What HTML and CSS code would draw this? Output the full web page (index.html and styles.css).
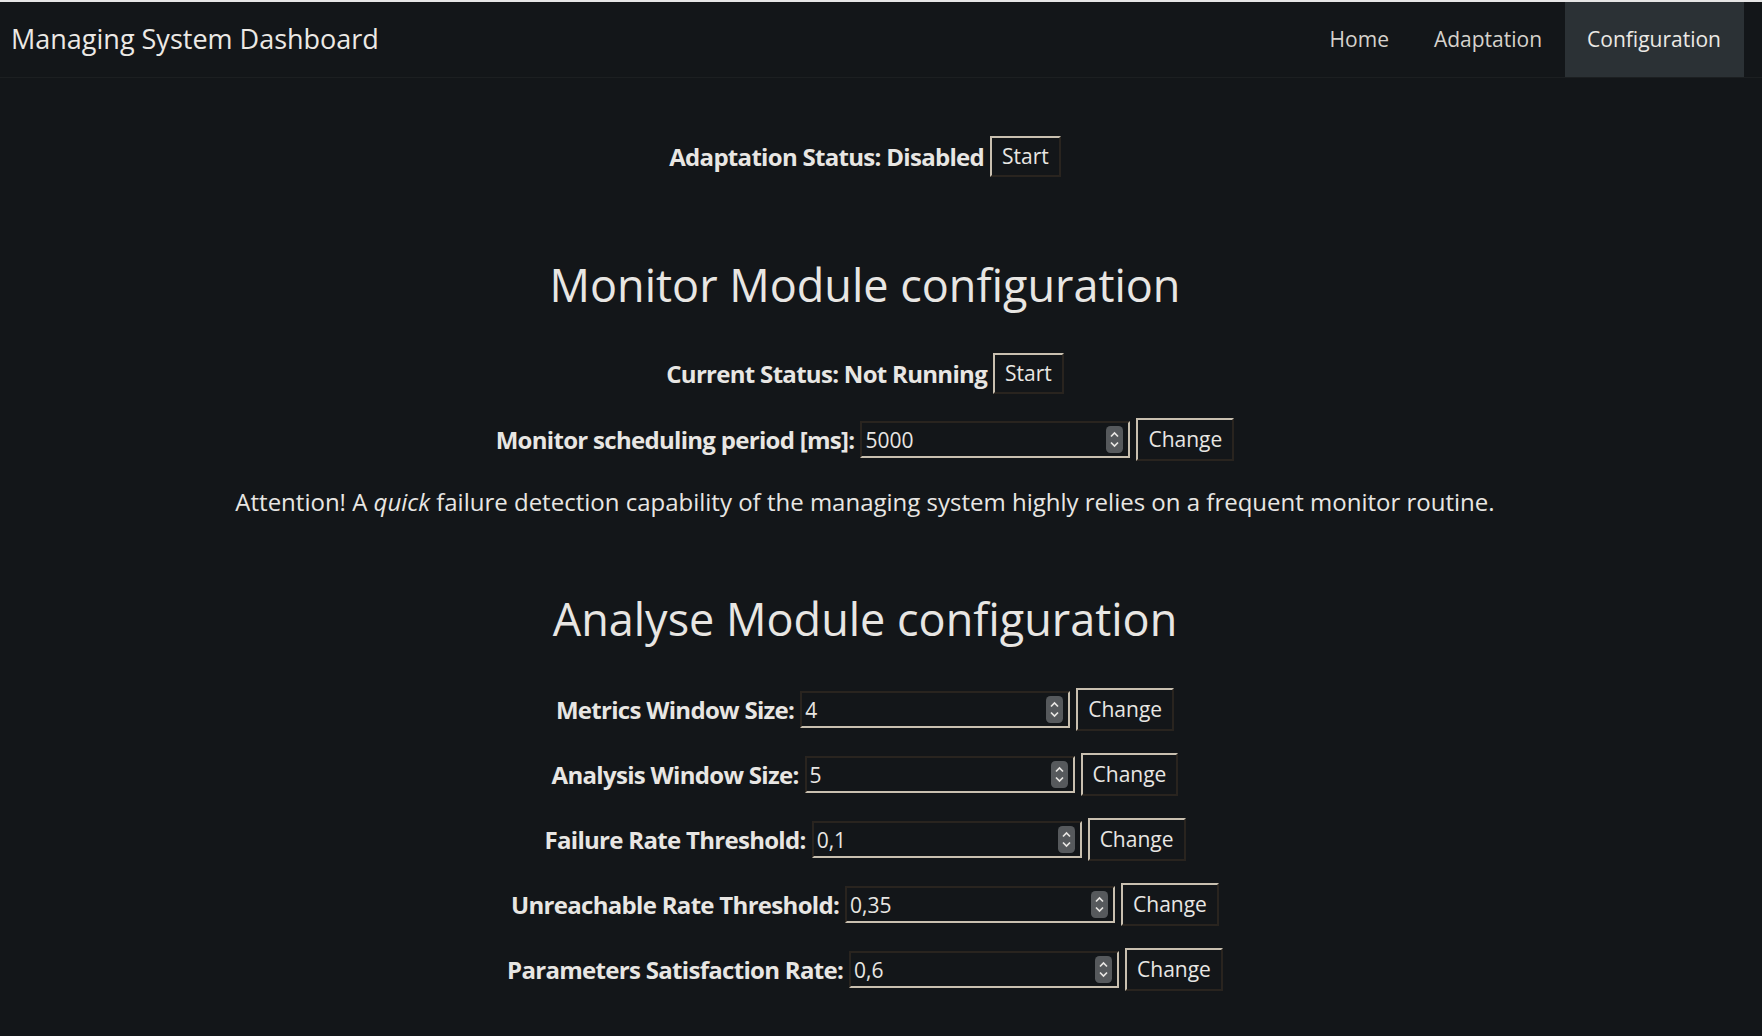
FILE: index.html
```html
<!DOCTYPE html>
<html lang="en">
<head>
<meta charset="utf-8">
<title>Managing System Dashboard</title>
<link rel="stylesheet" href="styles.css">
</head>
<body>
<header class="topbar">
  <div class="brand">Managing System Dashboard</div>
  <nav class="nav">
    <a class="nav-link" href="#">Home</a>
    <a class="nav-link" href="#">Adaptation</a>
    <a class="nav-link active" href="#">Configuration</a>
  </nav>
</header>

<main class="main">
  <div class="row row-adapt">
    <span class="label">Adaptation Status: Disabled</span>
    <button class="btn">Start</button>
  </div>

  <h2 class="section-title first-title">Monitor Module configuration</h2>

  <div class="row row-status">
    <span class="label">Current Status: Not Running</span>
    <button class="btn">Start</button>
  </div>

  <div class="row row-field row-monitor">
    <span class="label">Monitor scheduling period [ms]:</span>
    <div class="numfield">
      <input class="num-input" type="text" value="5000">
      <svg class="spinner" viewBox="0 0 17 27" width="17" height="27"><rect x="0" y="0" width="17" height="27" rx="4.5" fill="#56595c"/><path d="M5 10.5 L8.5 7 L12 10.5" fill="none" stroke="#e8e6e3" stroke-width="1.7"/><path d="M5 16.5 L8.5 20 L12 16.5" fill="none" stroke="#e8e6e3" stroke-width="1.7"/></svg>
    </div>
    <button class="btn btn-change">Change</button>
  </div>

  <p class="attention">Attention! A <em>quick</em> failure detection capability of the managing system highly relies on a frequent monitor routine.</p>

  <h2 class="section-title second-title">Analyse Module configuration</h2>

  <div class="row row-field row-first">
    <span class="label">Metrics Window Size:</span>
    <div class="numfield">
      <input class="num-input" type="text" value="4">
      <svg class="spinner" viewBox="0 0 17 27" width="17" height="27"><rect x="0" y="0" width="17" height="27" rx="4.5" fill="#56595c"/><path d="M5 10.5 L8.5 7 L12 10.5" fill="none" stroke="#e8e6e3" stroke-width="1.7"/><path d="M5 16.5 L8.5 20 L12 16.5" fill="none" stroke="#e8e6e3" stroke-width="1.7"/></svg>
    </div>
    <button class="btn btn-change">Change</button>
  </div>

  <div class="row row-field">
    <span class="label">Analysis Window Size:</span>
    <div class="numfield">
      <input class="num-input" type="text" value="5">
      <svg class="spinner" viewBox="0 0 17 27" width="17" height="27"><rect x="0" y="0" width="17" height="27" rx="4.5" fill="#56595c"/><path d="M5 10.5 L8.5 7 L12 10.5" fill="none" stroke="#e8e6e3" stroke-width="1.7"/><path d="M5 16.5 L8.5 20 L12 16.5" fill="none" stroke="#e8e6e3" stroke-width="1.7"/></svg>
    </div>
    <button class="btn btn-change">Change</button>
  </div>

  <div class="row row-field">
    <span class="label">Failure Rate Threshold:</span>
    <div class="numfield">
      <input class="num-input" type="text" value="0,1">
      <svg class="spinner" viewBox="0 0 17 27" width="17" height="27"><rect x="0" y="0" width="17" height="27" rx="4.5" fill="#56595c"/><path d="M5 10.5 L8.5 7 L12 10.5" fill="none" stroke="#e8e6e3" stroke-width="1.7"/><path d="M5 16.5 L8.5 20 L12 16.5" fill="none" stroke="#e8e6e3" stroke-width="1.7"/></svg>
    </div>
    <button class="btn btn-change">Change</button>
  </div>

  <div class="row row-field">
    <span class="label">Unreachable Rate Threshold:</span>
    <div class="numfield">
      <input class="num-input" type="text" value="0,35">
      <svg class="spinner" viewBox="0 0 17 27" width="17" height="27"><rect x="0" y="0" width="17" height="27" rx="4.5" fill="#56595c"/><path d="M5 10.5 L8.5 7 L12 10.5" fill="none" stroke="#e8e6e3" stroke-width="1.7"/><path d="M5 16.5 L8.5 20 L12 16.5" fill="none" stroke="#e8e6e3" stroke-width="1.7"/></svg>
    </div>
    <button class="btn btn-change">Change</button>
  </div>

  <div class="row row-field">
    <span class="label">Parameters Satisfaction Rate:</span>
    <div class="numfield">
      <input class="num-input" type="text" value="0,6">
      <svg class="spinner" viewBox="0 0 17 27" width="17" height="27"><rect x="0" y="0" width="17" height="27" rx="4.5" fill="#56595c"/><path d="M5 10.5 L8.5 7 L12 10.5" fill="none" stroke="#e8e6e3" stroke-width="1.7"/><path d="M5 16.5 L8.5 20 L12 16.5" fill="none" stroke="#e8e6e3" stroke-width="1.7"/></svg>
    </div>
    <button class="btn btn-change">Change</button>
  </div>
</main>
</body>
</html>
```

FILE: styles.css
```css
html, body {
  margin: 0;
  padding: 0;
  background: #131619;
  color: #e8e6e3;
  font-family: "Open Sans", "Liberation Sans", sans-serif;
  height: 100%;
  overflow: hidden;
}

.topbar {
  display: flex;
  align-items: stretch;
  justify-content: space-between;
  height: 75px;
  border-top: 2px solid #e6e6e6;
  border-bottom: 1px solid #1c1f21;
  background: #131619;
  padding: 0 18px 0 11px;
}

.brand {
  display: flex;
  align-items: center;
  font-size: 27px;
  color: #ece9e5;
  padding-bottom: 2px;
}

.nav {
  display: flex;
  align-items: stretch;
}

.nav-link {
  display: flex;
  align-items: center;
  padding: 0 23px 2px 22px;
  font-size: 21px;
  color: #d6d2cc;
  text-decoration: none;
}

.nav-link.active {
  background: #2b3135;
  color: #ece9e5;
}

.main {
  display: flex;
  flex-direction: column;
  align-items: center;
  text-align: center;
  padding-right: 32px;
}

.row {
  display: flex;
  align-items: center;
  justify-content: center;
  gap: 6px;
}

.label {
  font-weight: 700;
  font-size: 24px;
  letter-spacing: -0.7px;
}

.row-adapt {
  margin-top: 58px;
}

.row-status {
  margin-top: 41px;
}

.row-field {
  margin-top: 22px;
}

.row-monitor {
  margin-top: 24px;
}

.row-first {
  margin-top: 42px;
}

.section-title {
  font-weight: 400;
  font-size: 45px;
  line-height: 54px;
  margin: 0;
}

.first-title {
  margin-top: 81px;
}

.second-title {
  margin-top: 74px;
}

.btn {
  font-family: "Open Sans", "Liberation Sans", sans-serif;
  font-size: 21px;
  color: #e8e6e3;
  background: #131619;
  height: 41px;
  padding: 0 10px 2px;
  border: 2px solid;
  border-color: #c9c0b0 #29241f #29241f #c9c0b0;
}

.btn-change {
  height: 43px;
  padding: 0 10px 2px;
}

.numfield {
  display: flex;
  align-items: center;
  box-sizing: border-box;
  width: 270px;
  height: 37px;
  border: 2px solid;
  border-color: #29241f #c9c0b0 #c9c0b0 #29241f;
  padding: 0 5px 0 3px;
}

.num-input {
  flex: 1;
  min-width: 0;
  background: transparent;
  border: none;
  outline: none;
  padding: 0;
  font-family: "Open Sans", "Liberation Sans", sans-serif;
  font-size: 21px;
  color: #e8e6e3;
}

.spinner {
  flex: none;
}

.attention {
  font-size: 24px;
  line-height: 33px;
  margin: 24px 0 0;
}
```
